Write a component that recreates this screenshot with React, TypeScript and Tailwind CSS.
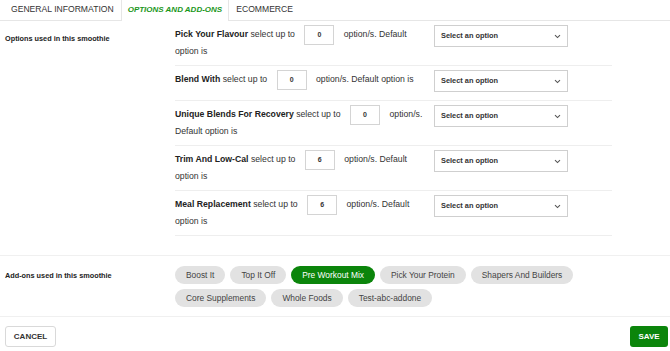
import React from "react";

const rows = [
  { title: "Pick Your Flavour", value: "0" },
  { title: "Blend With", value: "0" },
  { title: "Unique Blends For Recovery", value: "0" },
  { title: "Trim And Low-Cal", value: "6" },
  { title: "Meal Replacement", value: "6" },
];

const chips = [
  { label: "Boost It" },
  { label: "Top It Off" },
  { label: "Pre Workout Mix", active: true },
  { label: "Pick Your Protein" },
  { label: "Shapers And Builders" },
  { label: "Core Supplements" },
  { label: "Whole Foods" },
  { label: "Test-abc-addone" },
];

function Chevron() {
  return (
    <svg width="7" height="5" viewBox="0 0 7 5" className="shrink-0">
      <path d="M1 1.2 L3.5 3.6 L6 1.2" fill="none" stroke="#555" strokeWidth="1.1" />
    </svg>
  );
}

export default function App() {
  return (
    <div
      className="w-[670px] h-[351px] bg-white text-[#333] overflow-hidden"
      style={{ fontFamily: '"Liberation Sans", Arial, sans-serif' }}
    >
      {/* Tabs */}
      <div className="flex h-[21px] border-b border-[#e6e6e6] text-[8.6px] leading-none">
        <div className="pl-[11px] pr-[7px] pb-[2px] flex items-center text-[#333]">GENERAL INFORMATION</div>
        <div className="px-[6px] pb-[2px] flex items-center bg-white border-l border-r border-[#e6e6e6] h-[21px] -mb-px italic font-bold text-[8px] text-[#1a961a]">
          OPTIONS AND ADD-ONS
        </div>
        <div className="px-[7px] pb-[2px] flex items-center text-[#333]">ECOMMERCE</div>
      </div>

      {/* Options section */}
      <div className="flex pl-[5px] pb-[19px] border-b border-[#f0f0f0]">
        <div className="w-[170px] shrink-0 pt-[13px] text-[7.3px] font-bold text-[#222]">
          Options used in this smoothie
        </div>
        <div className="w-[437px]">
          {rows.map((r) => (
            <div
              key={r.title}
              className="flex items-start pt-[4px] border-b border-[#eeeeee]"
            >
              <div className="w-[250px] shrink-0 pt-[1px] pb-[5px] text-[8.7px] leading-[17px] text-[#333]">
                <span className="font-bold text-[#222]">{r.title}</span> select up to{" "}
                <span className="inline-flex items-center justify-center align-middle w-[30px] h-[20px] -my-[2px] mx-[7px] border border-[#d4d4d4] bg-white text-[7px] font-bold text-[#333]">
                  {r.value}
                </span>{" "}
                option/s. Default option is
              </div>
              <div className="ml-[9px] mb-[8px] w-[134px] h-[22px] border border-[#cfcfcf] bg-white flex items-center justify-between pl-[6px] pr-[6px] text-[7.4px] font-bold text-[#333]">
                <span>Select an option</span>
                <Chevron />
              </div>
            </div>
          ))}
        </div>
      </div>

      {/* Add-ons section */}
      <div className="flex pl-[5px] pt-[10px] pb-[9px] border-b border-[#f0f0f0]">
        <div className="w-[170px] shrink-0 pt-[5px] text-[7.3px] font-bold text-[#222]">
          Add-ons used in this smoothie
        </div>
        <div className="w-[420px] flex flex-wrap gap-x-[5px] gap-y-[5px]">
          {chips.map((c) => (
            <div
              key={c.label}
              className={
                c.active
                  ? "h-[18px] px-[11px] rounded-full bg-[#0b850b] text-white text-[8.4px] flex items-center"
                  : "h-[18px] px-[11px] rounded-full bg-[#e2e2e2] text-[#444] text-[8.4px] flex items-center"
              }
            >
              {c.label}
            </div>
          ))}
        </div>
      </div>

      {/* Footer */}
      <div className="flex items-center justify-between pl-[5px] pr-[2px] pt-[9px]">
        <button className="h-[21px] w-[51px] border border-[#d9d9d9] rounded-[3px] bg-white text-[8px] font-bold text-[#333] flex items-center justify-center">
          CANCEL
        </button>
        <button className="h-[21px] w-[38px] rounded-[3px] bg-[#0b850b] text-[8px] font-bold text-white flex items-center justify-center">
          SAVE
        </button>
      </div>
    </div>
  );
}
